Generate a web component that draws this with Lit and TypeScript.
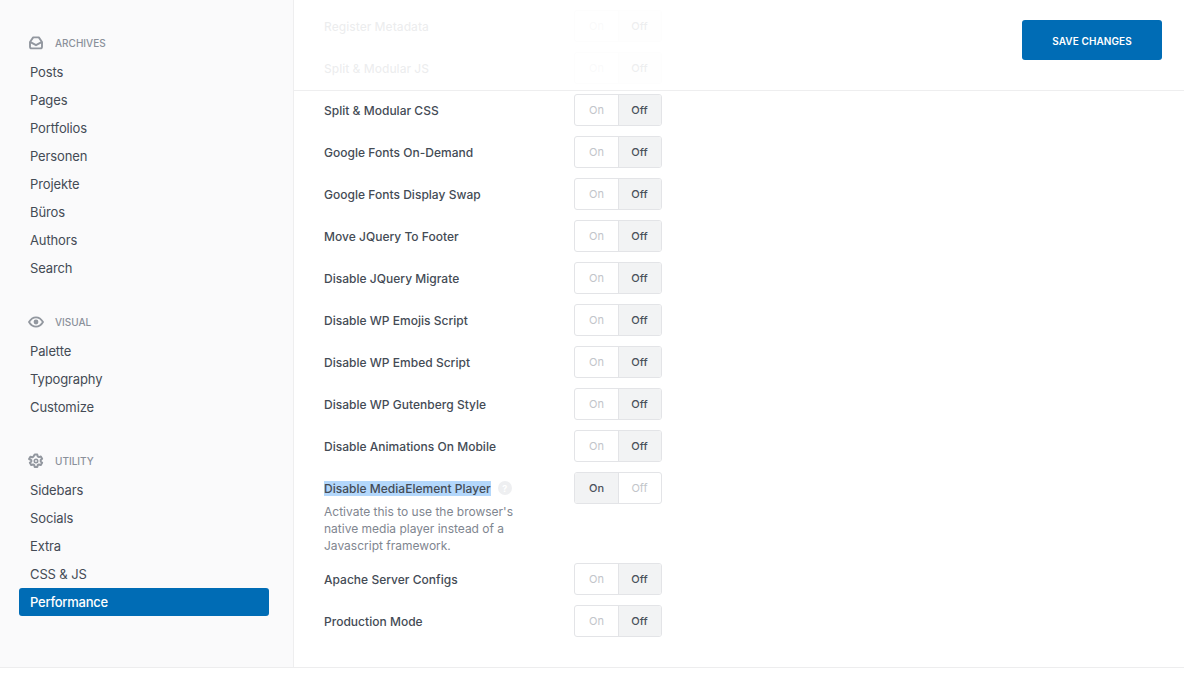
import { LitElement, html, css, svg } from "lit";
import { customElement } from "lit/decorators.js";

const archive = svg`<path d="M2 7 5.2 2.4h5.6L14 7v4.8a1.6 1.6 0 0 1-1.6 1.6H3.6A1.6 1.6 0 0 1 2 11.8z" fill="none" stroke="currentColor" stroke-width="1.9" stroke-linejoin="round"/><path d="M2 6.8 8 10.2l6-3.4" fill="none" stroke="currentColor" stroke-width="1.9" stroke-linejoin="round"/>`;
const eye = svg`<path d="M1 8C2.8 4.9 5.2 3.3 8 3.3S13.2 4.9 15 8C13.2 11.1 10.8 12.7 8 12.7S2.8 11.1 1 8z" fill="none" stroke="currentColor" stroke-width="1.8"/><circle cx="8" cy="8" r="2.4" fill="currentColor"/>`;
const gear = svg`<path d="M6.7 1.6h2.6l.4 1.8 1.3.7 1.8-.6 1.3 2.3-1.4 1.2v1.6l1.4 1.2-1.3 2.3-1.8-.6-1.3.7-.4 1.8H6.7l-.4-1.8-1.3-.7-1.8.6-1.3-2.3 1.4-1.2V7.2L1.1 6l1.3-2.3 1.8.6 1.3-.7z" fill="none" stroke="currentColor" stroke-width="2" stroke-linejoin="round"/><circle cx="8" cy="8" r="1.7" fill="none" stroke="currentColor" stroke-width="1.6"/>`;

const groups = [
  { title: "Archives", icon: archive, items: ["Posts", "Pages", "Portfolios", "Personen", "Projekte", "Büros", "Authors", "Search"] },
  { title: "Visual", icon: eye, items: ["Palette", "Typography", "Customize"] },
  { title: "Utility", icon: gear, items: ["Sidebars", "Socials", "Extra", "CSS & JS", "Performance"] },
];

const before = ["Register Metadata", "Split & Modular JS", "Split & Modular CSS", "Google Fonts On-Demand", "Google Fonts Display Swap", "Move JQuery To Footer", "Disable JQuery Migrate", "Disable WP Emojis Script", "Disable WP Embed Script", "Disable WP Gutenberg Style", "Disable Animations On Mobile"];
const after = ["Apache Server Configs", "Production Mode"];

@customElement("app-root")
export class AppRoot extends LitElement {
  static styles = css`
    :host { display: block; font-family: Inter, "Liberation Sans", sans-serif; color: #444b55; background: #fff; height: 680px; overflow: hidden; }
    * { box-sizing: border-box; }
    .page { position: relative; display: flex; height: 668px; border-bottom: 1px solid #ededee; }
    .side { width: 294px; flex: none; background: #fafafb; border-right: 1px solid #eeeeef; padding: 33px 24px 0 19px; }
    .group { margin-bottom: 30px; }
    .title { display: flex; align-items: center; height: 20px; margin-bottom: 5px; padding-left: 9px; font-size: 10px; font-weight: 500; text-transform: uppercase; color: #8a909a; }
    .title svg { width: 16px; height: 16px; margin-right: 11px; flex: none; color: #92979f; }
    .item { height: 28px; line-height: 28px; padding-left: 11px; font-size: 13px; letter-spacing: -.12px; border-radius: 3px; color: #444b55; }
    .item.active { background: #006cb5; color: #fff; font-weight: 500; letter-spacing: -.25px; }
    .main { flex: 1; padding: 10px 0 0 30px; display: flex; flex-direction: column; gap: 10px; }
    .row { display: flex; align-items: flex-start; }
    .labelcol { width: 250px; flex: none; }
    .label { display: flex; align-items: center; height: 32px; font-size: 12px; font-weight: 500; letter-spacing: .02px; color: #444b55; }
    .label.low { padding-top: 1px; }
    .sel { background: #b3d7fb; line-height: 15px; }
    .help { width: 14px; height: 14px; border-radius: 50%; background: #eeeff1; color: #fff; font-size: 9px; font-weight: 700; display: flex; align-items: center; justify-content: center; margin-left: 7px; }
    .desc { width: 210px; margin: -1px 0 -1px; font-size: 12px; line-height: 17px; color: #7f8690; }
    .toggle { display: flex; width: 88px; height: 32px; border: 1px solid #e3e4e7; border-radius: 3px; overflow: hidden; font-size: 11px; }
    .toggle span { display: flex; align-items: center; justify-content: center; color: #c2c5ca; }
    .toggle span:first-child { width: 44px; border-right: 1px solid #e3e4e7; }
    .toggle span:last-child { flex: 1; padding-right: 1px; }
    .toggle span.on { background: #f2f3f4; color: #4a515b; font-weight: 500; }
    .header { position: absolute; left: 294px; right: 0; top: 0; height: 91px; background: rgba(255,255,255,.9); border-bottom: 1px solid #eeeeef; display: flex; justify-content: flex-end; padding: 20px 22px 0 0; }
    .save { width: 140px; height: 40px; border: 0; padding: 1px 0 0; border-radius: 3px; background: #006cb5; color: #fff; font: 600 10px Inter, "Liberation Sans", sans-serif; letter-spacing: .1px; text-transform: uppercase; }
  `;

  private toggle(on: boolean) {
    return html`<div class="toggle"><span class=${on ? "on" : ""}>On</span><span class=${on ? "" : "on"}>Off</span></div>`;
  }

  private row(label: string, low = false) {
    return html`<div class="row"><div class="labelcol"><div class="label ${low ? "low" : ""}">${label}</div></div>${this.toggle(false)}</div>`;
  }

  render() {
    return html`<div class="page">
      <nav class="side">
        ${groups.map(g => html`<div class="group">
          <div class="title"><svg viewBox="0 0 16 16">${g.icon}</svg>${g.title}</div>
          ${g.items.map(i => html`<div class="item ${i === "Performance" ? "active" : ""}">${i}</div>`)}
        </div>`)}
      </nav>
      <main class="main">
        ${before.map(l => this.row(l))}
        <div class="row">
          <div class="labelcol">
            <div class="label"><span class="sel">Disable MediaElement Player</span><span class="help">?</span></div>
            <div class="desc">Activate this to use the browser's native media player instead of a Javascript framework.</div>
          </div>
          ${this.toggle(true)}
        </div>
        ${after.map(l => this.row(l, true))}
      </main>
      <header class="header"><button class="save">Save Changes</button></header>
    </div>`;
  }
}
